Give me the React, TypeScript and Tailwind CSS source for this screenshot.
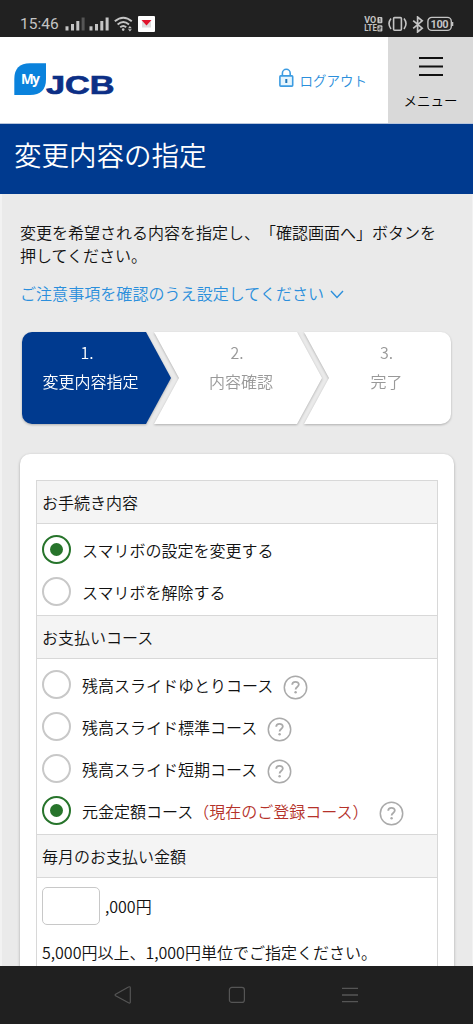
import type { ReactNode } from 'react';

interface CourseOption {
  label: string;
  note?: string;
  checked?: boolean;
}

const procedures: CourseOption[] = [
  { label: 'スマリボの設定を変更する', checked: true },
  { label: 'スマリボを解除する' },
];

const courses: CourseOption[] = [
  { label: '残高スライドゆとりコース' },
  { label: '残高スライド標準コース' },
  { label: '残高スライド短期コース' },
  { label: '元金定額コース', note: '（現在のご登録コース）', checked: true },
];

function SignalIcon({ weak = false }: { weak?: boolean }) {
  return (
    <svg width="20" height="14" viewBox="0 0 20 14" fill="#c4c4c4">
      <rect x="0.5" y="9.3" width="3" height="4.2" />
      <rect x="6" y="7" width="3" height="6.5" />
      <rect x="11.3" y="4" width="3" height="9.5" />
      <rect x="16.6" y="0.5" width="3" height="13" fill={weak ? '#555' : '#c4c4c4'} />
    </svg>
  );
}

function StatusBar() {
  return (
    <div className="flex h-[37px] shrink-0 items-center bg-[#212121] pt-[11px] pl-5 pr-[19px] font-normal text-[#c4c4c4]">
      <span className="w-[45px] pt-px font-[Roboto] text-[15.5px] leading-none">15:46</span>
      <SignalIcon weak />
      <span className="w-1" />
      <SignalIcon />
      <svg className="ml-[5px]" width="19" height="16" viewBox="0 0 19 16" fill="none" stroke="#c4c4c4" strokeWidth="1.9">
        <path d="M0.8 5.3Q9.3-2 17.8 5.3" />
        <path d="M3.6 8.4Q9.3 3.6 15 8.4" />
        <path d="M6.2 11.2Q9.3 8.6 12.2 11.2" />
        <circle cx="9.2" cy="13.6" r="1.3" fill="#c4c4c4" stroke="none" />
        <path d="M14 12.2l1.9-2.2 1.9 2.2zM14 13.3l1.9 2.2 1.9-2.2z" fill="#c4c4c4" stroke="none" />
      </svg>
      <svg className="ml-[5px]" width="17" height="16" viewBox="0 0 17 16">
        <rect width="17" height="16" rx="1" fill="#fff" />
        <rect x="4" y="4.5" width="9" height="7" fill="#ddd" />
        <path d="M3.5 4h10l-5 5.5z" fill="#e0142c" />
      </svg>
      <div className="ml-auto flex items-center">
        <svg width="19" height="16" viewBox="0 0 19 16" fill="#c4c4c4" fontFamily="Roboto" fontWeight="700" fontSize="9">
          <text x="0.2" y="7.2" textLength="12" lengthAdjust="spacingAndGlyphs">VO</text>
          <text x="0.2" y="15.4" textLength="12.6" lengthAdjust="spacingAndGlyphs">LTE</text>
          <rect x="13.4" y="1" width="5" height="6.2" rx="1" />
          <rect x="13.4" y="9.2" width="5" height="6.2" rx="1" />
          <path d="M15 3l1-.8v4M14.8 11h2v1.4h-2v1.5h2" fill="none" stroke="#212121" strokeWidth="0.8" />
        </svg>
        <svg className="ml-[5px]" width="19" height="16" viewBox="0 0 19 16" fill="none" stroke="#c4c4c4" strokeWidth="1.6">
          <rect x="5.6" y="1.6" width="7.8" height="12.6" rx="1" />
          <path d="M3 2.5Q-1 7.5 3 13M16 2.5Q20 7.5 16 13" />
        </svg>
        <svg className="ml-[5px]" width="12" height="17" viewBox="0 0 12 17" fill="none" stroke="#c4c4c4" strokeWidth="1.7">
          <path d="M1.2 4.6l9 7.6-4.6 3.8V1l4.6 3.8-9 7.6" />
        </svg>
        <svg className="ml-[3px]" width="27" height="16" viewBox="0 0 27 16">
          <rect x="0.9" y="1.4" width="23.4" height="13" rx="4" fill="none" stroke="#c4c4c4" strokeWidth="1.4" />
          <path d="M25.5 6v4" stroke="#c4c4c4" strokeWidth="1.6" />
          <text x="3.6" y="11.9" fontFamily="Roboto" fontWeight="700" fontSize="11" textLength="18" fill="#c4c4c4">100</text>
        </svg>
      </div>
    </div>
  );
}

function Logo() {
  return (
    <svg width="110" height="40" viewBox="0 0 110 40">
      <path d="M0.3 33V17Q0.3 1.3 16 1.3H32V17Q32 33 16 33Z" fill="#0a82dc" />
      <text x="7" y="22" fontFamily="Open Sans" fontWeight="700" fontSize="13.5" textLength="19" fill="#fff">My</text>
      <text
        x="32"
        y="32.4"
        fontFamily="Liberation Sans"
        fontWeight="700"
        fontSize="25.5"
        textLength="68.5"
        lengthAdjust="spacingAndGlyphs"
        fill="#0c2f86"
        stroke="#0c2f86"
        strokeWidth="0.7"
      >
        JCB
      </text>
    </svg>
  );
}

function Header() {
  return (
    <header className="flex h-[87px] shrink-0 border-b border-[#b9c6dc] bg-white">
      <div className="pt-[25px] pl-[14px]">
        <Logo />
      </div>
      <a className="mt-[31px] mr-[21px] ml-auto flex h-6 text-[13.5px] leading-6 text-[#2b8fdc]">
        <svg className="mr-[6px]" width="15" height="20" viewBox="0 0 15 20" fill="none" stroke="#3c9ce2" strokeWidth="1.6">
          <rect x="0.9" y="7.9" width="12.8" height="10.2" rx="0.8" fill="#e6f5fd" />
          <path d="M3.4 7.9V5.2a3.9 3.9 0 0 1 7.8 0v2.7" />
          <path d="M7.3 11v4" stroke="#2176b8" strokeWidth="2" />
        </svg>
        ログアウト
      </a>
      <button className="flex w-[85px] flex-col items-center bg-[#d9d9d9] pt-[19px] text-[13.5px] text-black">
        <svg width="24" height="22" viewBox="0 0 24 22" stroke="#111" strokeWidth="2.2">
          <path d="M0 2h24M0 10.5h24M0 19h24" />
        </svg>
        <span className="mt-[12px] leading-5">メニュー</span>
      </button>
    </header>
  );
}

function Steps() {
  return (
    <ol className="mt-[27px] ml-5 flex h-[92px] text-center text-base leading-[29px] text-[#999]">
      <li className="drop-shadow-[0_1px_1px_rgba(0,0,0,0.25)]">
        <div className="h-full w-[149px] rounded-l-[10px] bg-[#003a8f] pt-[6px] pr-[12px] text-white [clip-path:polygon(0_0,124px_0,100%_50%,124px_100%,0_100%)]">
          <p className="pr-[7px]">1.</p>
          <p>変更内容指定</p>
        </div>
      </li>
      <li className="-ml-[17px] drop-shadow-[0_1px_1px_rgba(0,0,0,0.25)]">
        <div className="h-full w-[168px] bg-white pt-[6px] pl-[6px] [clip-path:polygon(0_0,143px_0,100%_50%,143px_100%,0_100%,25px_50%)]">
          <p className="pr-[8px]">2.</p>
          <p>内容確認</p>
        </div>
      </li>
      <li className="-ml-[18px] drop-shadow-[0_1px_1px_rgba(0,0,0,0.25)]">
        <div className="h-full w-[147px] rounded-r-[10px] bg-white pt-[6px] pl-[18px] [clip-path:polygon(0_0,100%_0,100%_100%,0_100%,25px_50%)]">
          <p>3.</p>
          <p>完了</p>
        </div>
      </li>
    </ol>
  );
}

function Radio({ checked }: { checked?: boolean }) {
  return (
    <span
      className={`flex size-[29px] shrink-0 items-center justify-center rounded-full border-2 ${
        checked ? 'border-[#27742b]' : 'border-[#c8c8c8]'
      }`}
    >
      {checked && <span className="size-[13px] rounded-full bg-[#27742b]" />}
    </span>
  );
}

function HelpIcon() {
  return (
    <svg className="mt-[6px] ml-[10px] shrink-0" width="25" height="25" viewBox="0 0 25 25" fill="none" stroke="#aaa">
      <circle cx="12.5" cy="12.5" r="11.2" strokeWidth="1.5" />
      <path d="M9.2 9.8c0-4 6.6-3.9 6.6-.2 0 2.4-3.2 2.4-3.2 4.8" strokeWidth="1.8" />
      <circle cx="12.6" cy="17.2" r="1.2" fill="#aaa" stroke="none" />
    </svg>
  );
}

function OptionRow({ option, help }: { option: CourseOption; help?: boolean }) {
  return (
    <label className="flex h-[42px] items-center pl-[5px]">
      <Radio checked={option.checked} />
      <span className="ml-[11px] pt-[2px] whitespace-nowrap">
        {option.label}
        {option.note && <span className="mr-px text-[#b5322a]">{option.note}</span>}
      </span>
      {help && <HelpIcon />}
    </label>
  );
}

function SectionTitle({ children }: { children: ReactNode }) {
  return <h2 className="h-[43px] border-b border-[#d8d8d8] bg-[#f4f4f4] pl-[5px] leading-[42px]">{children}</h2>;
}

function NavBar() {
  return (
    <nav className="flex h-[58px] shrink-0 items-center justify-between bg-[#202020] px-[114px]">
      <svg width="18" height="18" viewBox="0 0 18 18" fill="none" stroke="#555" strokeWidth="1.2">
        <path d="M1.6 8.3L14.5 1q1.8-.8 1.8 1v14q0 1.6-1.8.8L1.6 9.7q-1-.7 0-1.4z" />
      </svg>
      <svg width="18" height="18" viewBox="0 0 18 18" fill="none" stroke="#555" strokeWidth="1.2">
        <rect x="1.4" y="1.4" width="15" height="15" rx="2.5" />
      </svg>
      <svg width="18" height="18" viewBox="0 0 18 18" stroke="#555" strokeWidth="1.3">
        <path d="M1 2.3h16M1 9h16M1 15.7h16" />
      </svg>
    </nav>
  );
}

export default function App() {
  return (
    <div className="flex h-[1024px] w-[473px] flex-col overflow-hidden bg-[#eaeaea] font-['Noto_Sans_CJK_JP',sans-serif] text-base font-[350] text-[#111] [text-spacing-trim:space-all]">
      <StatusBar />
      <Header />
      <h1 className="h-[70px] shrink-0 bg-[#003a8f] pl-[14px] text-[27.5px] leading-[60px] text-white">変更内容の指定</h1>
      <main className="min-h-0 flex-1 overflow-hidden border-r border-l-2 border-[#f2f2f2]">
        <p className="mt-[27px] pl-[18px] leading-[23px] whitespace-nowrap">
          変更を希望される内容を指定し、「確認画面へ」ボタンを
          <br />
          押してください。
        </p>
        <a className="mt-[14px] flex items-center pl-[18px] leading-6 tracking-[0.06px] text-[#2b8fdc]">
          ご注意事項を確認のうえ設定してください
          <svg className="mt-[2px] ml-[6px]" width="14" height="9" viewBox="0 0 14 9" fill="none" stroke="#2b8fdc" strokeWidth="1.4">
            <path d="M1 1l6 6.4L13 1" />
          </svg>
        </a>
        <Steps />
        <div className="mt-[30px] ml-[18px] h-[560px] w-[434px] rounded-[10px] bg-white px-4 pt-[26px] shadow-[0_1px_3px_rgba(0,0,0,0.3)]">
          <div className="h-full border border-[#d8d8d8]">
            <SectionTitle>お手続き内容</SectionTitle>
            <div className="h-[92px] border-b border-[#d8d8d8] pt-[4px]">
              {procedures.map((option) => (
                <OptionRow key={option.label} option={option} />
              ))}
            </div>
            <SectionTitle>お支払いコース</SectionTitle>
            <div className="h-[176px] border-b border-[#d8d8d8] pt-[4px]">
              {courses.map((option) => (
                <OptionRow key={option.label} option={option} help />
              ))}
            </div>
            <SectionTitle>毎月のお支払い金額</SectionTitle>
            <div className="px-[5px] pt-[9px]">
              <div className="flex items-center">
                <input className="mr-[5px] h-[38px] w-[58px] rounded-[5px] border border-[#c8c8c8] bg-white" />
                ,000円
              </div>
              <p className="mt-[15px]">5,000円以上、1,000円単位でご指定ください。</p>
            </div>
          </div>
        </div>
      </main>
      <NavBar />
    </div>
  );
}
